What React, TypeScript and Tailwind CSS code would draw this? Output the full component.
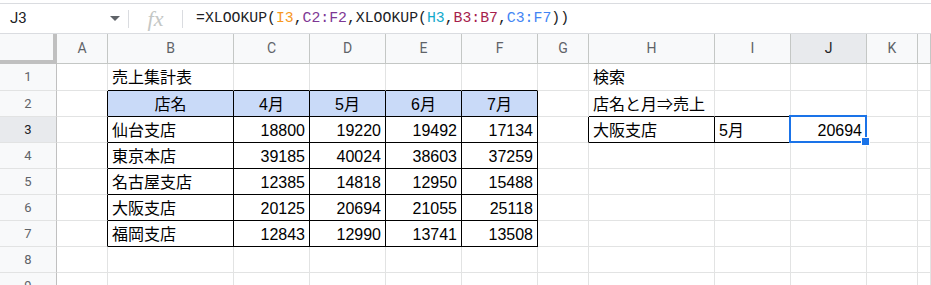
import React from "react";

const COLS = ["A", "B", "C", "D", "E", "F", "G", "H", "I", "J", "K", ""];

type Cell = { text: string; align?: "left" | "right" | "center" };

// row index 1..9, column letter -> content
const DATA: Record<number, Record<string, Cell>> = {
  1: { B: { text: "売上集計表" }, H: { text: "検索" } },
  2: {
    B: { text: "店名", align: "center" },
    C: { text: "4月", align: "center" },
    D: { text: "5月", align: "center" },
    E: { text: "6月", align: "center" },
    F: { text: "7月", align: "center" },
    H: { text: "店名と月⇒売上" },
  },
  3: {
    B: { text: "仙台支店" },
    C: { text: "18800", align: "right" },
    D: { text: "19220", align: "right" },
    E: { text: "19492", align: "right" },
    F: { text: "17134", align: "right" },
    H: { text: "大阪支店" },
    I: { text: "5月" },
    J: { text: "20694", align: "right" },
  },
  4: {
    B: { text: "東京本店" },
    C: { text: "39185", align: "right" },
    D: { text: "40024", align: "right" },
    E: { text: "38603", align: "right" },
    F: { text: "37259", align: "right" },
  },
  5: {
    B: { text: "名古屋支店" },
    C: { text: "12385", align: "right" },
    D: { text: "14818", align: "right" },
    E: { text: "12950", align: "right" },
    F: { text: "15488", align: "right" },
  },
  6: {
    B: { text: "大阪支店" },
    C: { text: "20125", align: "right" },
    D: { text: "20694", align: "right" },
    E: { text: "21055", align: "right" },
    F: { text: "25118", align: "right" },
  },
  7: {
    B: { text: "福岡支店" },
    C: { text: "12843", align: "right" },
    D: { text: "12990", align: "right" },
    E: { text: "13741", align: "right" },
    F: { text: "13508", align: "right" },
  },
};

// bordered ranges: [row1, col1, row2, col2] with col as index into COLS
const BOXES = [
  [2, 1, 7, 5],
  [3, 7, 3, 9],
];

const inBox = (r: number, c: number) =>
  BOXES.some(([r1, c1, r2, c2]) => r >= r1 && r <= r2 && c >= c1 && c <= c2);

function FormulaBar() {
  return (
    <div className="pt-[3px]">
      <div className="h-[31px] flex items-center border-t border-b border-[#dadce0] bg-white">
        <div className="w-[128px] flex items-center justify-between pl-[10px] pr-[8px] text-[15px] text-[#202124] font-['Roboto','Liberation_Sans',sans-serif]">
          <span>J3</span>
          <svg width="10" height="5" viewBox="0 0 10 5">
            <path d="M0 0 L10 0 L5 5 Z" fill="#5f6368" />
          </svg>
        </div>
        <div className="w-px h-[18px] bg-[#dadce0]" />
        <div className="w-[53px] flex justify-center text-[22px] italic text-[#c4c7c5] font-['Liberation_Serif',serif] leading-none">
          fx
        </div>
        <div className="w-px h-[18px] bg-[#dadce0]" />
        <div className="pl-[13px] text-[14.8px] font-['Liberation_Mono',monospace] text-[#202124] whitespace-nowrap">
          =XLOOKUP(<span className="text-[#f7981d]">I3</span>,<span className="text-[#7e3794]">C2:F2</span>,XLOOKUP(<span className="text-[#11a9cc]">H3</span>,<span className="text-[#a61d4c]">B3:B7</span>,<span className="text-[#4285f4]">C3:F7</span>))
        </div>
      </div>
    </div>
  );
}

export default function App() {
  const rows = [1, 2, 3, 4, 5, 6, 7, 8, 9];

  return (
    <div className="w-[931px] h-[285px] overflow-hidden bg-white relative">
      <FormulaBar />
      <div className="grid grid-cols-[57px_51px_126px_76px_76px_76px_76px_51px_126px_76px_76px_51px_1fr] relative">
        {/* corner */}
        <div className="h-[30px] bg-[#f8f9fa] border-r-[4px] border-b-[4px] border-[#c0c0c0]" />
        {COLS.map((col) => (
          <div
            key={col || "L"}
            className={`h-[30px] flex items-center justify-center border-r border-b border-[#c4c7c5] text-[14px] font-['Roboto','Liberation_Sans',sans-serif] pb-[1px] ${
              col === "J" ? "bg-[#e8eaed] text-[#202124]" : "bg-[#f8f9fa] text-[#5f6368]"
            }`}
          >
            {col}
          </div>
        ))}

        {rows.map((r) => (
          <React.Fragment key={r}>
            <div
              className={`${r === 1 ? "h-[27px]" : "h-[26px]"} flex items-center justify-center border-r border-b border-r-[#c0c0c0] border-b-[#e2e3e3] text-[13px] font-['Roboto','Liberation_Sans',sans-serif] ${
                r === 3 ? "bg-[#e8eaed] text-[#202124]" : "bg-[#f8f9fa] text-[#5f6368]"
              }`}
            >
              {r}
            </div>
            {COLS.map((col, c) => {
              const cell = DATA[r]?.[col];
              const rightBlack = inBox(r, c) || inBox(r, c + 1);
              const bottomBlack = inBox(r, c) || inBox(r + 1, c);
              const head = r === 2 && c >= 1 && c <= 5;
              return (
                <div
                  key={col || "L"}
                  className={`${r === 1 ? "h-[27px]" : "h-[26px]"} flex items-center px-[4px] overflow-visible whitespace-nowrap border-r border-b text-[16px] text-black font-['Liberation_Sans','Noto_Sans_CJK_JP',sans-serif] leading-none pt-[2px] ${
                    rightBlack ? "border-r-black" : "border-r-[#e2e3e3]"
                  } ${bottomBlack ? "border-b-black" : "border-b-[#e2e3e3]"} ${
                    head ? "bg-[#c9daf8]" : "bg-white"
                  } ${
                    cell?.align === "right"
                      ? "justify-end"
                      : cell?.align === "center"
                      ? "justify-center"
                      : "justify-start"
                  }`}
                >
                  {cell?.text}
                </div>
              );
            })}
          </React.Fragment>
        ))}

        {/* selection J3 */}
        <div className="absolute left-[789px] top-[81px] w-[78px] h-[28px] border-2 border-[#1a73e8] pointer-events-none" />
        <div className="absolute left-[861px] top-[103px] w-[9px] h-[9px] bg-[#1a73e8] border border-white pointer-events-none" />
      </div>
    </div>
  );
}
